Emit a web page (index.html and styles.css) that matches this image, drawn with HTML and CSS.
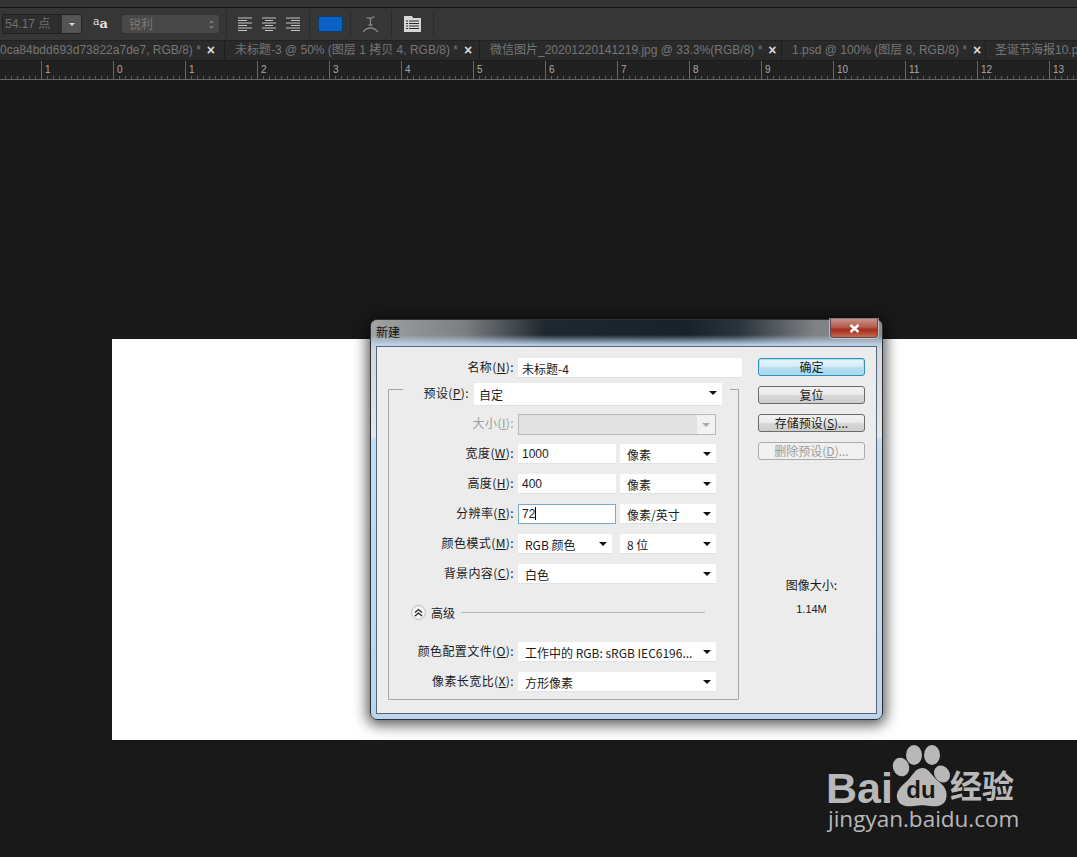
FILE: index.html
```html
<!DOCTYPE html>
<html lang="zh-CN">
<head>
  <meta charset="UTF-8">
  <title>新建</title>
  <link rel="stylesheet" href="styles.css">
</head>
<body>
  <div class="app">
    <div class="topstrip"></div>

    <div class="toolbar">
      <div class="size-box">
        <span class="size-value">54.17 点</span>
        <span class="size-arrow"><i class="arrow arrow-light"></i></span>
      </div>
      <div class="aa"><span class="aa-small">a</span><span class="aa-big">a</span></div>
      <div class="sharp-box">
        <span>锐利</span>
        <svg class="updown" width="7" height="11" viewBox="0 0 7 11"><path d="M3.5 1 6 4H1zM3.5 10 1 7h5z" fill="#777"/></svg>
      </div>
      <div class="tool-sep sep-a"></div>
      <svg class="align" width="14" height="15" viewBox="0 0 14 15"><path d="M0 1h14M0 3.500h9M0 6h14M0 8.500h9M0 11h14M0 13.500h9" stroke="#c4c4c4" stroke-width="1.200"/></svg>
      <svg class="align" width="14" height="15" viewBox="0 0 14 15"><path d="M0 1h14M3 3.500h8M0 6h14M3 8.500h8M0 11h14M3 13.500h8" stroke="#c4c4c4" stroke-width="1.200"/></svg>
      <svg class="align" width="14" height="15" viewBox="0 0 14 15"><path d="M0 1h14M5 3.500h9M0 6h14M5 8.500h9M0 11h14M5 13.500h9" stroke="#c4c4c4" stroke-width="1.200"/></svg>
      <div class="tool-sep sep-b"></div>
      <div class="swatch"></div>
      <div class="tool-sep sep-c"></div>
      <svg class="warp" width="17" height="18" viewBox="0 0 17 18"><path d="M4.500 2.500c2 1 5 1 8-1M8.500 2.500V9.500M6.500 10h4M1 17C3.500 14 6 13 8.500 13S13.500 14 16 17" fill="none" stroke="#858585" stroke-width="1.300"/></svg>
      <div class="tool-sep sep-d"></div>
      <svg class="panel-icon" width="17" height="16" viewBox="0 0 17 16"><path d="M0 0h8l1 2h8v14H0z" fill="#d6d6d6"/><path d="M2 5h2M5 5h10M2 7.500h2M5 7.500h10M2 10h2M5 10h10M2 12.500h2M5 12.500h10" stroke="#2c2c2c" stroke-width="1.100"/></svg>
      <div class="tool-sep sep-e"></div>
    </div>

    <div class="tabs">
      <div class="tab tab-first"><span class="tab-name">0ca84bdd693d73822a7de7, RGB/8) *</span><span class="tab-close">×</span></div>
      <div class="tab tab-second"><span class="tab-name">未标题-3 @ 50% (图层 1 拷贝 4, RGB/8) *</span><span class="tab-close">×</span></div>
      <div class="tab tab-third"><span class="tab-name">微信图片_20201220141219.jpg @ 33.3%(RGB/8) *</span><span class="tab-close">×</span></div>
      <div class="tab tab-fourth"><span class="tab-name">1.psd @ 100% (图层 8, RGB/8) *</span><span class="tab-close">×</span></div>
      <div class="tab tab-fifth"><span class="tab-name">圣诞节海报10.psd</span></div>
    </div>

    <div class="ruler">
      <div class="ruler-cell">1</div>
      <div class="ruler-cell">0</div>
      <div class="ruler-cell">1</div>
      <div class="ruler-cell">2</div>
      <div class="ruler-cell">3</div>
      <div class="ruler-cell">4</div>
      <div class="ruler-cell">5</div>
      <div class="ruler-cell">6</div>
      <div class="ruler-cell">7</div>
      <div class="ruler-cell">8</div>
      <div class="ruler-cell">9</div>
      <div class="ruler-cell">10</div>
      <div class="ruler-cell">11</div>
      <div class="ruler-cell">12</div>
      <div class="ruler-cell">13</div>
    </div>

    <div class="workspace">
      <div class="canvas"></div>

      <div class="dialog">
        <div class="titlebar">
          <span class="title">新建</span>
          <div class="close-btn">
            <svg width="11" height="9" viewBox="0 0 11 9"><path d="M1.500 1 9.500 8M9.500 1 1.500 8" stroke="#fff" stroke-width="2.400"/></svg>
          </div>
        </div>
        <div class="pane">
          <div class="form">
            <div class="row row-name">
              <label class="lbl">名称(<u>N</u>):</label>
              <div class="field field-name">未标题-4</div>
            </div>
            <div class="group">
              <div class="row row-preset">
                <label class="lbl">预设(<u>P</u>):</label>
                <div class="field field-preset">自定<i class="arrow"></i></div>
              </div>
              <div class="row row-size">
                <label class="lbl lbl-off">大小(<u>I</u>):</label>
                <div class="field field-off"><span class="off-fill"></span><i class="arrow arrow-off"></i></div>
              </div>
              <div class="row">
                <label class="lbl">宽度(<u>W</u>):</label>
                <div class="field field-num">1000</div>
                <div class="field field-unit">像素<i class="arrow"></i></div>
              </div>
              <div class="row">
                <label class="lbl">高度(<u>H</u>):</label>
                <div class="field field-num">400</div>
                <div class="field field-unit">像素<i class="arrow"></i></div>
              </div>
              <div class="row">
                <label class="lbl">分辨率(<u>R</u>):</label>
                <div class="field field-num field-focus">72<span class="caret"></span></div>
                <div class="field field-unit">像素/英寸<i class="arrow"></i></div>
              </div>
              <div class="row">
                <label class="lbl">颜色模式(<u>M</u>):</label>
                <div class="field field-mode">RGB 颜色<i class="arrow"></i></div>
                <div class="field field-depth">8 位<i class="arrow"></i></div>
              </div>
              <div class="row">
                <label class="lbl">背景内容(<u>C</u>):</label>
                <div class="field field-wide">白色<i class="arrow"></i></div>
              </div>
              <div class="advanced">
                <span class="adv-btn">
                  <svg width="9" height="9" viewBox="0 0 9 9"><path d="M1 4.500 4.500 1.500 8 4.500M1 8 4.500 5 8 8" fill="none" stroke="#222" stroke-width="1.300"/></svg>
                </span>
                <span class="adv-text">高级</span>
                <span class="adv-line"></span>
              </div>
              <div class="row">
                <label class="lbl">颜色配置文件(<u>O</u>):</label>
                <div class="field field-wide">工作中的 RGB: sRGB IEC6196...<i class="arrow"></i></div>
              </div>
              <div class="row">
                <label class="lbl">像素长宽比(<u>X</u>):</label>
                <div class="field field-wide">方形像素<i class="arrow"></i></div>
              </div>
            </div>
          </div>

          <div class="side">
            <button class="btn btn-default">确定</button>
            <button class="btn">复位</button>
            <button class="btn">存储预设(<u>S</u>)...</button>
            <button class="btn btn-off">删除预设(<u>D</u>)...</button>
            <div class="doc-size">
              <div>图像大小:</div>
              <div class="doc-value">1.14M</div>
            </div>
          </div>
        </div>
      </div>

      <div class="logo">
        <div class="logo-top">
          <span class="logo-bai">Bai</span>
          <svg class="logo-paw" width="62" height="72" viewBox="0 0 62 72">
            <ellipse cx="22" cy="13" rx="8" ry="10" fill="#b8b8b8"/>
            <ellipse cx="40" cy="13" rx="8" ry="10" fill="#b8b8b8"/>
            <ellipse cx="9" cy="25" rx="8" ry="9.500" transform="rotate(-20 9 25)" fill="#b8b8b8"/>
            <ellipse cx="50" cy="32" rx="7.500" ry="9" transform="rotate(-35 50 32)" fill="#b8b8b8"/>
            <path d="M30 26C37 26 40 34 46 39C53 44 56 50 54 57C52 64 45 65 38 64C32 63 28 63 22 64C14 65 7 64 5 56C4 50 8 45 14 40C20 35 23 26 30 26Z" fill="#b8b8b8"/>
            <text class="logo-du" x="29" y="56" text-anchor="middle">du</text>
          </svg>
          <span class="logo-cn">经验</span>
        </div>
        <div class="logo-url">jingyan.baidu.com</div>
      </div>
    </div>
  </div>
</body>
</html>
```

FILE: styles.css
```css
* {
  box-sizing: border-box;
}
html, body {
  margin: 0;
  padding: 0;
}
body {
  font-family: "Noto Sans CJK SC", "Liberation Sans", sans-serif;
  font-size: 12px;
  background-color: #191919;
}
.app {
  width: 1077px;
  height: 857px;
  overflow: hidden;
  display: flex;
  flex-direction: column;
}
.topstrip {
  height: 8px;
  background-color: #333;
  border-bottom: 1px solid #141414;
}
.toolbar {
  height: 33px;
  flex: none;
  background-color: #363636;
  border-bottom: 1px solid #222;
  display: flex;
  align-items: center;
  padding-left: 2px;
}

/* font size box */
.size-box {
  width: 80px;
  height: 20px;
  display: flex;
  border: 1px solid #202020;
  background-color: #2e2e2e;
  border-radius: 2px;
}
.size-value {
  flex: 1;
  color: #6f6f6f;
  padding-left: 2px;
  line-height: 18px;
  font-family: "Liberation Sans", "Noto Sans CJK SC", sans-serif;
}
.size-arrow {
  width: 19px;
  background-color: #555;
  display: flex;
  align-items: center;
  justify-content: center;
}
.aa {
  margin-left: 11px;
  width: 17px;
  color: #e2e2e2;
  font-family: "DejaVu Serif", serif;
  display: flex;
  align-items: baseline;
  line-height: 14px;
}
.aa-small {
  font-size: 11px;
  position: relative;
  top: -3px;
}
.aa-big {
  font-size: 13px;
  font-weight: bold;
}
.sharp-box {
  margin-left: 11px;
  width: 99px;
  height: 20px;
  background-color: #484848;
  border: 1px solid #333;
  border-radius: 3px;
  color: #7a7a7a;
  padding: 0 4px 0 7px;
  line-height: 18px;
  display: flex;
  justify-content: space-between;
  align-items: center;
}
.tool-sep {
  width: 1px;
  height: 26px;
  background-color: #2b2b2b;
}
.sep-a {
  margin: 0 11px 0 6px;
}
.align {
  margin-right: 10px;
}
.sep-b {
  margin: 0 8px 0 -1px;
}
.swatch {
  width: 25px;
  height: 16px;
  background-color: #0a62c4;
  border: 1px solid #123a66;
}
.sep-c {
  margin: 0 11px 0 7px;
}
.sep-d {
  margin: 0 12px 0 12px;
}
.sep-e {
  margin-left: 12px;
}

/* document tabs */
.tabs {
  height: 20px;
  flex: none;
  background-color: #2a2a2a;
  border-bottom: 1px solid #1c1c1c;
  display: flex;
  color: #767676;
  line-height: 19px;
  overflow: hidden;
  white-space: nowrap;
}
.tab {
  flex: none;
  display: flex;
  border-right: 1px solid #1e1e1e;
}
.tab-name {
  font-family: "Liberation Sans", "Noto Sans CJK SC", sans-serif;
}
.tab-close {
  color: #d8d8d8;
  font-size: 14px;
  font-weight: bold;
  line-height: 18px;
  font-family: "Liberation Sans", sans-serif;
  margin-left: 6px;
}
.tab-first {
  width: 225px;
}
.tab-second {
  width: 255px;
  padding-left: 10px;
}
.tab-third {
  width: 302px;
  padding-left: 10px;
}
.tab-fourth {
  width: 204px;
  padding-left: 10px;
}
.tab-fifth {
  border-right: none;
  padding-left: 9px;
}

/* ruler */
.ruler {
  height: 19px;
  flex: none;
  display: flex;
  padding-left: 41px;
  overflow: hidden;
  border-bottom: 1px solid #666;
  background-color: #212121;
  background-image: repeating-linear-gradient(to right, #5c5c5c 0, #5c5c5c 1px, transparent 1px, transparent 6px);
  background-size: 100% 3px;
  background-position: 5px bottom;
  background-repeat: no-repeat;
}
.ruler-cell {
  flex: none;
  width: 72px;
  border-left: 1px solid #666;
  color: #a8a8a8;
  font-family: "Liberation Sans", sans-serif;
  font-size: 10px;
  line-height: 17px;
  padding-left: 3px;
}

.workspace {
  flex: 1;
  position: relative;
  background-color: #191919;
}
.canvas {
  position: absolute;
  left: 112px;
  top: 259px;
  width: 965px;
  height: 401px;
  background-color: #fff;
}

/* dialog window */
.dialog {
  position: absolute;
  left: 370px;
  top: 239px;
  width: 513px;
  height: 401px;
  padding: 0 5px 5px;
  border-radius: 7px;
  border: 1px solid #2b3138;
  box-shadow: 0 2px 14px 3px rgba(0, 0, 0, 0.65);
  background: linear-gradient(to bottom, #7e8488 0, #d4d8dc 30px, #e4e6e8 117px, #c6dcf0 119px, #bdd5ea 100%);
}
.titlebar {
  height: 26px;
  margin: 0 -5px;
  padding-left: 5px;
  position: relative;
  border-radius: 6px 6px 0 0;
  background:
    linear-gradient(to bottom, rgba(255, 255, 255, 0) 0, rgba(255, 255, 255, 0) 15px, rgba(190, 215, 238, 0.95) 25px),
    linear-gradient(to right, #a0a2a3 0, #7d8083 18%, #1f282f 34%, #18222a 62%, #2a343c 72%, #7f8285 87%, #8b8d8f 100%);
}
.title {
  line-height: 24px;
  color: #111;
}
.close-btn {
  position: absolute;
  right: 4px;
  top: -1px;
  width: 48px;
  height: 19px;
  border: 1px solid #5e4a48;
  border-top: none;
  border-radius: 0 0 4px 4px;
  background: linear-gradient(to bottom, #c9928a 0, #b65a4c 45%, #a42c1a 60%, #c66a58 100%);
  box-shadow: 0 0 0 1px rgba(255, 255, 255, 0.45);
  display: flex;
  align-items: center;
  justify-content: center;
}
.pane {
  height: 368px;
  background-color: #ececec;
  border: 1px solid #56677a;
  display: flex;
  padding: 11px 11px 0 11px;
  color: #1a1a1a;
}

/* form on the left */
.form {
  width: 354px;
  flex: none;
  margin-right: 16px;
}
.row {
  display: flex;
  height: 30px;
  align-items: center;
  width: 351px;
}
.lbl {
  flex: none;
  width: 130px;
  text-align: right;
  padding-right: 4px;
  white-space: nowrap;
  letter-spacing: 0.4px;
  line-height: 16px;
  position: relative;
  top: -1px;
}
.lbl u {
  text-underline-offset: 1px;
}
.lbl-off {
  color: #9c9c9c;
}
.field {
  height: 20px;
  background-color: #fff;
  border-bottom: 1px solid #dfe3e6;
  line-height: 19px;
  padding: 1px 0 0 7px;
  position: relative;
  white-space: nowrap;
  flex: none;
}
.field .arrow {
  position: absolute;
  right: 5px;
  top: 8px;
}
.row-name {
  height: 20px;
}
.field-name {
  width: 224px;
  padding-left: 4px;
}
.group {
  width: 351px;
  height: 311px;
  margin-top: 11px;
  border: 1px solid #a5a5a5;
  border-radius: 1px;
}
.group .row {
  margin-left: -1px;
}
.row-preset {
  height: 24px;
  margin-top: -8px;
  margin-bottom: 7px;
}
.group .row-preset {
  width: 327px;
  margin-left: 14px;
  background-color: #ececec;
  padding-right: 6px;
}
.group .row-preset .lbl {
  width: 71px;
  padding-right: 5px;
}
.field-preset {
  width: 248px;
  height: 23px;
  line-height: 21px;
  padding-left: 5px;
}
.row-size {
  height: 22px;
  margin-bottom: 4px;
}
.field-off {
  width: 198px;
  height: 21px;
  padding: 0 0 0 6px;
  border: 1px solid #b8b8b8;
  background-color: #f2f2f2;
}
.off-fill {
  display: block;
  width: 178px;
  height: 19px;
  margin-left: -6px;
  background-color: #e2e2e2;
}
.field .arrow-off {
  border-top-color: #aaa;
}
.field-num {
  width: 98px;
  padding-left: 4px;
  font-family: "Liberation Sans", sans-serif;
}
.field-focus {
  border: 1px solid #7fa9c9;
  padding: 0 0 0 3px;
  line-height: 18px;
}
.caret {
  display: inline-block;
  width: 1px;
  height: 13px;
  background-color: #000;
  vertical-align: -2px;
}
.field-unit {
  width: 96px;
  margin-left: 4px;
}
.field-mode {
  width: 94px;
}
.field-depth {
  width: 96px;
  margin-left: 8px;
}
.field-wide {
  width: 198px;
}
.advanced {
  height: 48px;
  padding: 0 33px 1px 22px;
  display: flex;
  align-items: center;
}
.adv-btn {
  width: 15px;
  height: 15px;
  border-radius: 50%;
  background-color: #f4f4f4;
  border: 1px solid #bcbcbc;
  display: flex;
  align-items: center;
  justify-content: center;
}
.adv-text {
  margin-left: 5px;
}
.adv-line {
  flex: 1;
  height: 1px;
  background-color: #b4b4b4;
  margin-left: 6px;
}

/* buttons on the right */
.side {
  width: 107px;
  flex: none;
  display: flex;
  flex-direction: column;
}
.btn {
  width: 107px;
  height: 18px;
  padding: 0;
  margin-bottom: 10px;
  font-family: inherit;
  font-size: 12px;
  line-height: 16px;
  color: #1a1a1a;
  border: 1px solid #6a6a6a;
  border-radius: 3px;
  background: linear-gradient(to bottom, #f2f2f2 0, #ebebeb 45%, #d6d6d6 55%, #cfcfcf 100%);
}
.btn-default {
  border-color: #2f8fbc;
  box-shadow: inset 0 0 0 1px #a5e3f5;
  background: linear-gradient(to bottom, #e6f5fb 0, #d5eef8 45%, #b5def0 55%, #aad8ed 100%);
}
.btn-off {
  color: #9c9c9c;
  border-color: #ababab;
  background: #f0f0f0;
}
.doc-size {
  margin-top: 107px;
  text-align: center;
  line-height: 16px;
}
.doc-value {
  margin-top: 8px;
  font-family: "Liberation Sans", sans-serif;
  font-size: 11px;
}

.arrow {
  display: inline-block;
  width: 0;
  height: 0;
  border-left: 4px solid transparent;
  border-right: 4px solid transparent;
  border-top: 4px solid #111;
}
.arrow-light {
  border-left-width: 3px;
  border-right-width: 3px;
  border-top: 3px solid #ddd;
}

/* watermark */
.logo {
  position: absolute;
  left: 826px;
  top: 662px;
  width: 200px;
  color: #b8b8b8;
}
.logo-top {
  height: 63px;
  display: flex;
  align-items: flex-end;
  position: relative;
}
.logo-bai {
  font-family: "Liberation Sans", sans-serif;
  font-weight: bold;
  font-size: 43px;
  line-height: 34px;
}
.logo-paw {
  position: absolute;
  left: 66px;
  top: 0;
}
.logo-du {
  font-family: "Liberation Sans", sans-serif;
  font-weight: bold;
  font-size: 24px;
  fill: #191919;
}
.logo-cn {
  position: absolute;
  left: 124px;
  top: 26px;
  font-family: "Noto Sans CJK SC", sans-serif;
  font-weight: bold;
  font-size: 32px;
  line-height: 32px;
}
.logo-url {
  font-family: "Open Sans", sans-serif;
  font-size: 22.5px;
  line-height: 24px;
  margin-left: 2px;
  margin-top: 2px;
  white-space: nowrap;
}
```
